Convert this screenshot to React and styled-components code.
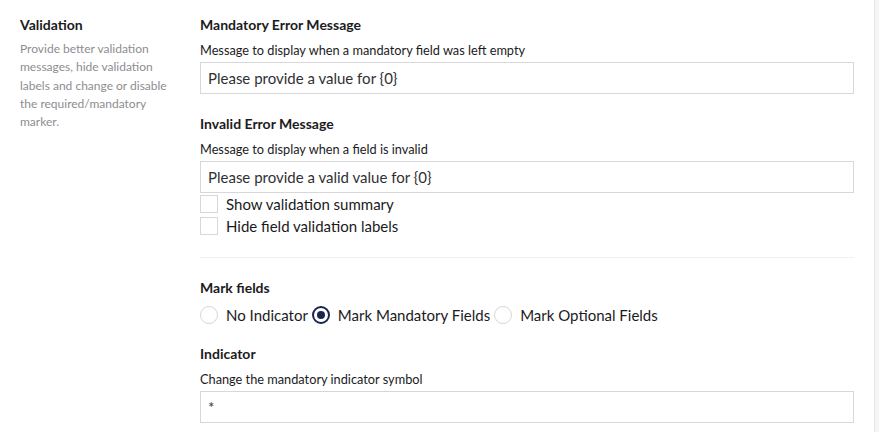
import React, { useState } from "react";
import styled, { createGlobalStyle } from "styled-components";

const GlobalStyle = createGlobalStyle`
  html, body {
    margin: 0;
    padding: 0;
    background: #f6f6f7;
    font-family: Lato, "Open Sans", sans-serif;
    color: #1b1b1d;
  }
`;

const Panel = styled.div`
  width: 875px;
  min-height: 432px;
  box-sizing: border-box;
  background: #fff;
  border-right: 1px solid #e6e6e8;
  padding: 15px 20px 0;
  display: grid;
  grid-template-columns: 160px 1fr;
  column-gap: 20px;
`;

const Aside = styled.div`
  display: flex;
  flex-direction: column;
`;

const GroupTitle = styled.div`
  font-size: 14px;
  font-weight: 700;
  line-height: 20px;
`;

const GroupText = styled.div`
  margin-top: 5px;
  font-size: 12px;
  line-height: 18.25px;
  color: #8d8d91;
`;

const Fields = styled.div`
  display: flex;
  flex-direction: column;
`;

const Property = styled.div`
  display: flex;
  flex-direction: column;
  margin-bottom: ${(p) => p.gap ?? 20}px;
`;

const Label = styled.div`
  font-size: 14px;
  font-weight: 700;
  line-height: 20px;
  margin-bottom: 6px;
`;

const Description = styled.div`
  font-size: 12.75px;
  line-height: 18px;
  margin-bottom: 3px;
`;

const TextInput = styled.input`
  box-sizing: border-box;
  width: 100%;
  height: 32px;
  border: 1px solid #d8d7d9;
  padding: 0 7px;
  font-family: inherit;
  font-size: 15px;
  color: #303033;
  background: #fff;
  outline: none;
`;

const CheckRow = styled.label`
  display: flex;
  align-items: center;
  gap: 8px;
  height: 22px;
  font-size: 15px;
  cursor: pointer;
`;

const Box = styled.span`
  width: 18px;
  height: 18px;
  box-sizing: border-box;
  border: 1px solid #d8d7d9;
  background: ${(p) => (p.checked ? "#1b264f" : "#fff")};
  flex: none;
`;

const Divider = styled.hr`
  border: 0;
  border-top: 1px solid #f0f0f2;
  margin: 0 0 20px;
`;

const RadioGroup = styled.div`
  display: flex;
  align-items: center;
  gap: 4px;
  height: 22px;
`;

const RadioOption = styled.label`
  display: flex;
  align-items: center;
  gap: 8px;
  font-size: 15px;
  cursor: pointer;
`;

const Radio = styled.span`
  width: 18px;
  height: 18px;
  box-sizing: border-box;
  border-radius: 50%;
  border: ${(p) => (p.checked ? "2px solid #1b264f" : "1px solid #d8d7d9")};
  display: flex;
  align-items: center;
  justify-content: center;
  flex: none;

  &::after {
    content: "";
    width: 8px;
    height: 8px;
    border-radius: 50%;
    background: #1b264f;
    display: ${(p) => (p.checked ? "block" : "none")};
  }
`;

const MARKS = ["No Indicator", "Mark Mandatory Fields", "Mark Optional Fields"];

export default function App() {
  const [summary, setSummary] = useState(false);
  const [hideLabels, setHideLabels] = useState(false);
  const [mark, setMark] = useState(1);

  return (
    <>
      <GlobalStyle />
      <Panel>
        <Aside>
          <GroupTitle>Validation</GroupTitle>
          <GroupText>
            Provide better validation messages, hide validation labels and
            change or disable the required/mandatory marker.
          </GroupText>
        </Aside>
        <Fields>
          <Property>
            <Label>Mandatory Error Message</Label>
            <Description>
              Message to display when a mandatory field was left empty
            </Description>
            <TextInput defaultValue="Please provide a value for {0}" />
          </Property>
          <Property>
            <Label>Invalid Error Message</Label>
            <Description>Message to display when a field is invalid</Description>
            <TextInput defaultValue="Please provide a valid value for {0}" />
            <CheckRow onClick={() => setSummary(!summary)}>
              <Box checked={summary} />
              Show validation summary
            </CheckRow>
            <CheckRow onClick={() => setHideLabels(!hideLabels)}>
              <Box checked={hideLabels} />
              Hide field validation labels
            </CheckRow>
          </Property>
          <Divider />
          <Property gap={18}>
            <Label>Mark fields</Label>
            <RadioGroup>
              {MARKS.map((m, i) => (
                <RadioOption key={m} onClick={() => setMark(i)}>
                  <Radio checked={mark === i} />
                  {m}
                </RadioOption>
              ))}
            </RadioGroup>
          </Property>
          <Property>
            <Label>Indicator</Label>
            <Description>Change the mandatory indicator symbol</Description>
            <TextInput defaultValue="*" />
          </Property>
        </Fields>
      </Panel>
    </>
  );
}
